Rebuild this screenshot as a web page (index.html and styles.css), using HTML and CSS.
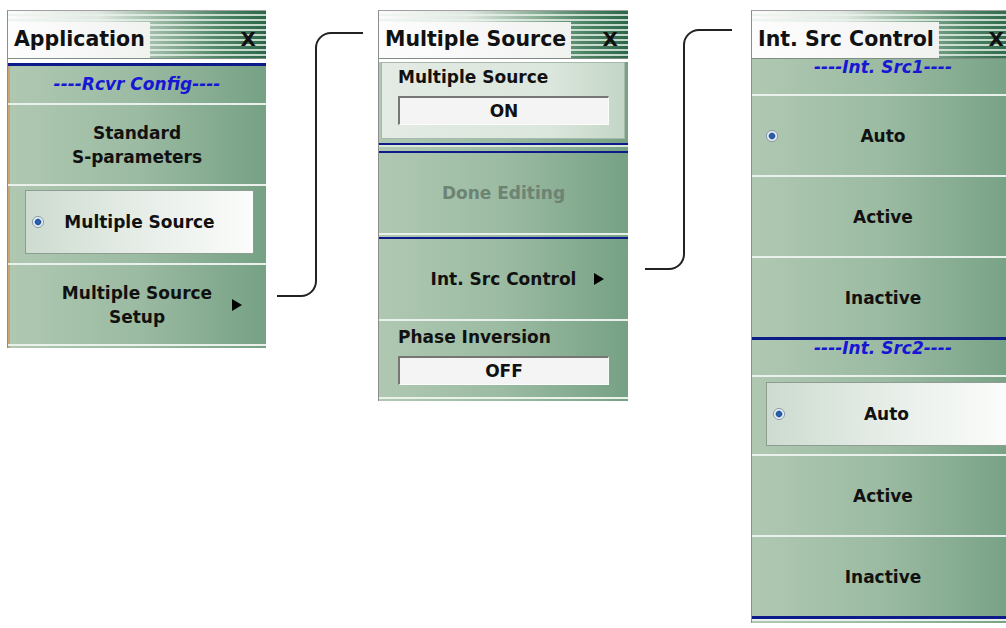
FILE: index.html
```html
<!DOCTYPE html>
<html lang="en">
<head>
    <meta charset="UTF-8">
    <title>Multiple Source Setup</title>
    <link rel="stylesheet" href="styles.css">
</head>
<body>
    <div class="canvas">
        <section class="panel panel-app">
            <header class="title"><span class="title-text">Application</span><span class="close">X</span></header>
            <div class="body">
                <div class="head head-rule">
                    <div class="rule"></div>
                    <span class="head-text">----Rcvr Config----</span>
                </div>
                <div class="item"><span class="label">Standard<br>S-parameters</span></div>
                <div class="item selected">
                    <div class="btn"><span class="radio"></span><span class="label">Multiple Source</span></div>
                </div>
                <div class="item"><span class="label">Multiple Source<br>Setup</span><span class="arrow"></span></div>
                <div class="sep"></div>
            </div>
        </section>

        <section class="panel panel-src">
            <header class="title"><span class="title-text">Multiple Source</span><span class="close">X</span></header>
            <div class="body">
                <div class="group lit">
                    <div class="group-label">Multiple Source</div>
                    <div class="field">ON</div>
                </div>
                <div class="double-rule"></div>
                <div class="item plain"><span class="label disabled">Done Editing</span></div>
                <div class="sep"></div>
                <div class="rule thin"></div>
                <div class="item plain"><span class="label">Int. Src Control</span><span class="arrow"></span></div>
                <div class="sep"></div>
                <div class="group">
                    <div class="group-label">Phase Inversion</div>
                    <div class="field">OFF</div>
                </div>
                <div class="sep"></div>
            </div>
        </section>

        <section class="panel panel-int">
            <header class="title"><span class="title-text">Int. Src Control</span><span class="close">X</span></header>
            <div class="body">
                <div class="head"><span class="head-text">----Int. Src1----</span></div>
                <div class="item"><span class="radio"></span><span class="label">Auto</span></div>
                <div class="item"><span class="label">Active</span></div>
                <div class="item"><span class="label">Inactive</span></div>
                <div class="rule"></div>
                <div class="head"><span class="head-text">----Int. Src2----</span></div>
                <div class="item selected">
                    <div class="btn"><span class="radio"></span><span class="label">Auto</span></div>
                </div>
                <div class="item"><span class="label">Active</span></div>
                <div class="item"><span class="label">Inactive</span></div>
                <div class="rule"></div>
                <div class="sep"></div>
            </div>
        </section>

        <!-- connectors between the menus -->
        <svg class="links" width="1006" height="628" viewBox="0 0 1006 628">
            <path d="M277 296 H301 A15 15 0 0 0 316 281 V48 A15 15 0 0 1 331 33 H363" />
            <path d="M645 269 H669 A15 15 0 0 0 684 254 V45 A15 15 0 0 1 699 30 H732" />
        </svg>
    </div>
</body>
</html>
```

FILE: styles.css
```css
body {
    margin: 0;
    background: #fff;
    font-family: "DejaVu Sans", Verdana, sans-serif;
    color: #111;
    overflow: hidden;
}
.canvas {
    position: relative;
    display: flex;
    align-items: flex-start;
    width: 1006px;
    height: 628px;
    padding: 10px 0 0 7px;
    box-sizing: border-box;
    overflow: hidden;
}
.panel {
    flex: none;
    border-left: 1px solid #8c8c8c;
    border-top: 1px solid #a0a0a0;
}
.panel-app {
    width: 258px;
}
.panel-src {
    width: 249px;
    margin-left: 112px;
}
.panel-int {
    width: 262px;
    margin-left: 123px;
}

/* title bar */
.title {
    height: 47px;
    display: flex;
    align-items: flex-end;
    justify-content: space-between;
    border-bottom: 1px solid #7f8c82;
    background:
        repeating-linear-gradient(to bottom, rgba(255,255,255,0) 0 3px, rgba(232,243,235,0.8) 3px 5px),
        linear-gradient(to right, #fbfbfb 0%, #dfe7e1 35%, #8fb19a 62%, #4f8566 82%, #2c6649 100%);
}
.title-text {
    height: 36px;
    line-height: 34px;
    padding: 0 5px 0 6px;
    font-size: 20.5px;
    font-weight: bold;
    background: linear-gradient(to right, #fdfdfd, #f0f2f0);
}
.close {
    height: 36px;
    line-height: 34px;
    margin-right: 10px;
    font-size: 20px;
    font-weight: bold;
}

/* menu body */
.body {
    background: linear-gradient(to right, #b0c8b2 0%, #9bbba2 50%, #76a184 100%);
    padding-bottom: 2px;
}
.panel-app .body {
    box-shadow: inset 2px 0 #c8a572;
}
.rule {
    height: 3px;
    background: #0c1a8a;
}
.rule.thin {
    height: 2px;
    margin-top: 2px;
}
.double-rule {
    height: 6px;
    margin-top: 4px;
    border-top: 2px solid #0c1a8a;
    border-bottom: 2px solid #0c1a8a;
    background: linear-gradient(#dce8de 0 2px, transparent 2px);
}
.sep {
    height: 2px;
    background: #eaf1eb;
}
.head {
    height: 35px;
    text-align: center;
}
.head-text {
    display: block;
    line-height: 16px;
    font-size: 17px;
    font-weight: bold;
    font-style: italic;
    color: #1616d4;
}
.head-rule {
    height: 40px;
}
.head-rule .rule {
    margin-top: 4px;
}
.head-rule .head-text {
    line-height: 24px;
    padding-top: 6px;
}

/* menu items */
.item {
    height: 79px;
    border-top: 2px solid #eaf1eb;
    display: grid;
    grid-template-columns: 34px 1fr 34px;
    align-items: center;
}
.item.plain {
    height: 80px;
    border-top: none;
}
.label {
    grid-column: 2;
    text-align: center;
    font-size: 17px;
    font-weight: bold;
    line-height: 24px;
}
.label.disabled {
    color: #6d8373;
}
.radio {
    grid-column: 1;
    grid-row: 1;
    justify-self: start;
    margin-left: 14px;
    width: 10px;
    height: 10px;
    border: 1px solid #8796a6;
    border-radius: 50%;
    background: radial-gradient(circle closest-side, #2a62b0 0 30%, #1a4586 50%, #6f9bd2 62%, #f3f6f9 80%);
}
.arrow {
    grid-column: 3;
    justify-self: start;
    width: 0;
    height: 0;
    border-left: 10px solid #000;
    border-top: 6px solid transparent;
    border-bottom: 6px solid transparent;
}
.item.selected {
    display: block;
    padding: 4px 12px 0 17px;
    box-sizing: border-box;
}
.panel-int .item.selected {
    padding: 5px 7px 0 14px;
}
.btn {
    height: 62px;
    display: grid;
    grid-template-columns: 22px 1fr 22px;
    align-items: center;
    border: 1px solid #8e9c91;
    background: linear-gradient(to right, #cddbd0 0%, #e6ede7 50%, #fbfcfb 100%);
}
.btn .radio {
    margin-left: 6px;
}

/* labelled groups with a value field */
.group {
    height: 76px;
    padding: 6px 0 0 19px;
    box-sizing: border-box;
}
.group.lit {
    height: 77px;
    margin: 3px 3px 0 2px;
    padding: 4px 0 0 16px;
    border: 1px solid #a7b9aa;
    background: linear-gradient(to right, #e3ebe4 0%, #dbe6dc 70%, #c3d6c6 100%);
}
.group-label {
    font-size: 17px;
    font-weight: bold;
    line-height: 20px;
}
.field {
    width: 208px;
    height: 26px;
    margin-top: 9px;
    line-height: 27px;
    text-align: center;
    font-size: 17px;
    font-weight: bold;
    background: #f3f4f3;
    border-top: 2px solid #767676;
    border-left: 2px solid #767676;
    border-bottom: 1px solid #fbfbfb;
    border-right: 1px solid #fbfbfb;
}

/* connector lines */
.links {
    position: absolute;
    left: 0;
    top: 0;
    pointer-events: none;
}
.links path {
    fill: none;
    stroke: #222;
    stroke-width: 2;
}
```
